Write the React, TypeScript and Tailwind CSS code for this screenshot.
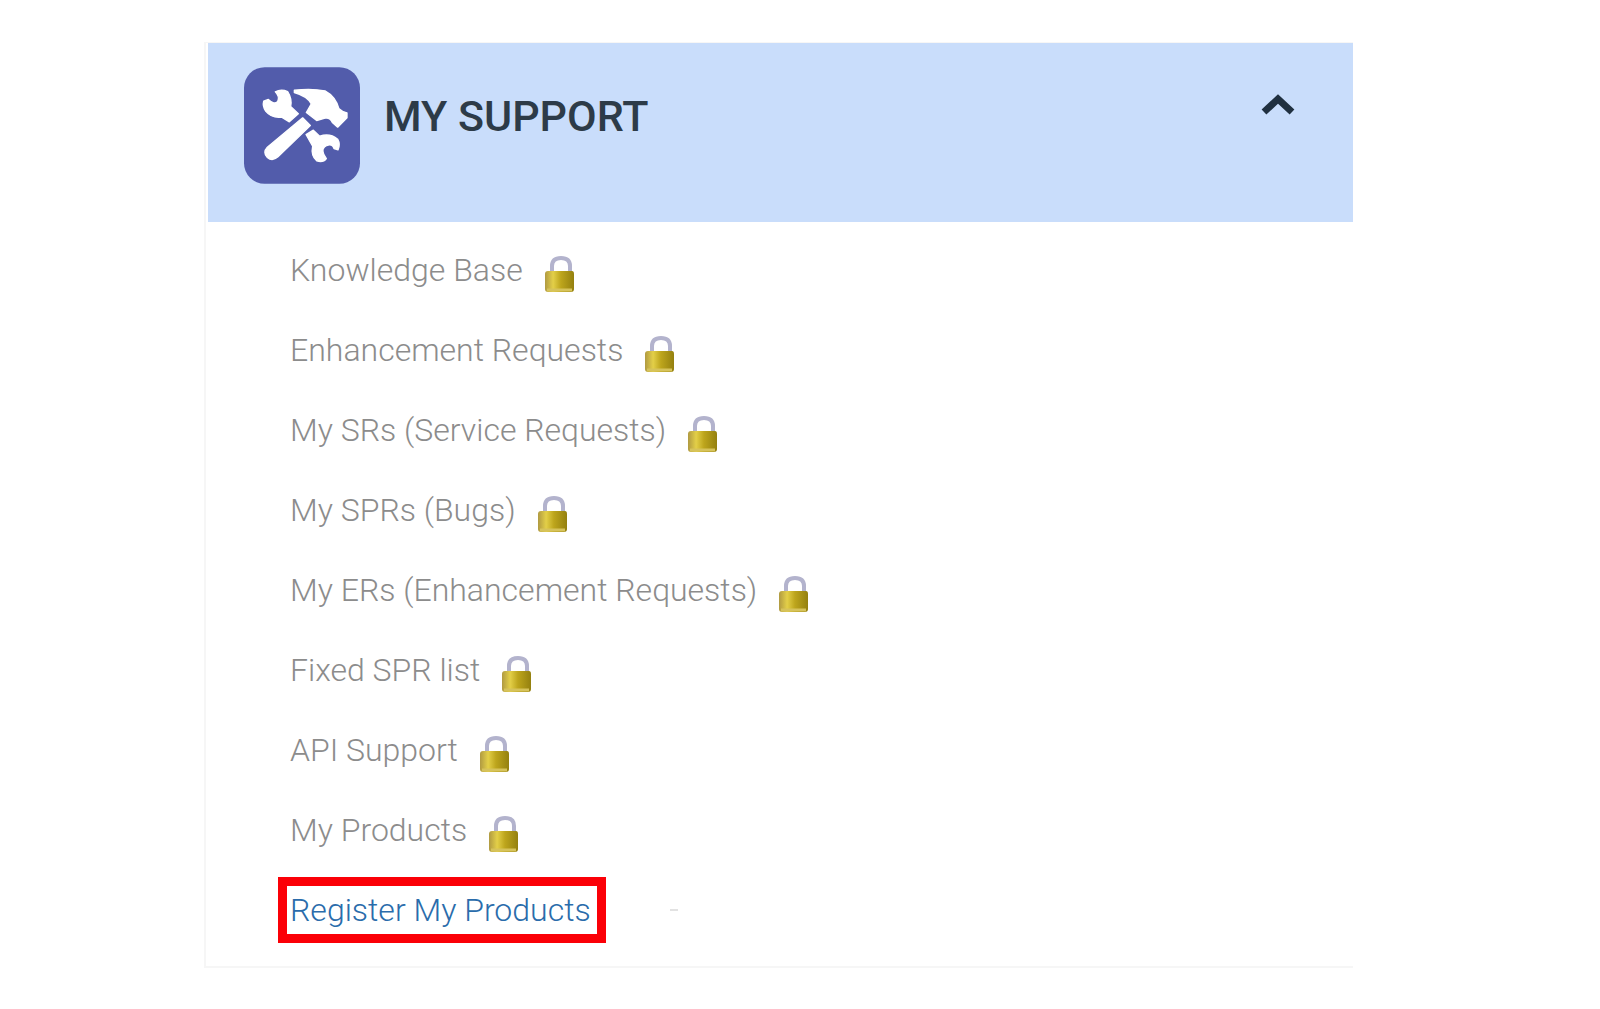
import React, { useState } from "react";

interface SupportLink {
  label: string;
  locked: boolean;
}

const supportLinks: SupportLink[] = [
  { label: "Knowledge Base", locked: true },
  { label: "Enhancement Requests", locked: true },
  { label: "My SRs (Service Requests)", locked: true },
  { label: "My SPRs (Bugs)", locked: true },
  { label: "My ERs (Enhancement Requests)", locked: true },
  { label: "Fixed SPR list", locked: true },
  { label: "API Support", locked: true },
  { label: "My Products", locked: true },
  { label: "Register My Products", locked: false },
];

const ToolsIcon: React.FC = () => (
  <svg viewBox="27 20 348 350" className="w-[116px] h-[117px] shrink-0" aria-hidden="true">
    <rect x="27" y="20" width="348" height="350" rx="62" fill="#525cab" />
    <g fill="#ffffff" stroke="#ffffff" strokeWidth="4" strokeLinejoin="round">
      {/* wrench, upper jaw */}
      <path d="M86 122L100 117Q118 134 128 123Q135 108 121 94Q138 84 158 93Q172 115 167 138L190 160L163 184L140 170Q110 174 92 152Q82 137 86 122Z" />
      {/* hammer head */}
      <path d="M178 89Q230 83 270 91Q302 108 312 145Q322 155 336 157L336 172L308 200L292 186Q285 170 270 173L245 180L214 156L229 130Q217 107 178 96Z" />
      {/* hammer handle */}
      <path d="M203 172L226 195L129 289Q112 304 97 291Q82 276 97 260Z" />
      {/* wrench, lower jaw */}
      <path d="M213 222L235 209L254 227Q285 217 308 236Q317 252 309 268L297 264Q292 249 275 255Q258 264 266 281L274 294Q265 307 245 301Q227 285 233 257Z" />
    </g>
  </svg>
);

const LockIcon: React.FC = () => (
  <svg viewBox="0 0 32 38" className="w-8 h-[38px] mt-2 shrink-0" aria-hidden="true">
    <defs>
      <linearGradient id="lock-body" x1="0" x2="1" y1="0" y2="0">
        <stop offset="0" stopColor="#b09a42" />
        <stop offset="0.28" stopColor="#e3cf48" />
        <stop offset="0.55" stopColor="#bda51c" />
        <stop offset="1" stopColor="#94800f" />
      </linearGradient>
    </defs>
    <path d="M9 19V11Q9 3 18 3Q27 3 27 11V19" fill="none" stroke="#b3b3cd" strokeWidth="4" />
    <path d="M2 19Q2 16 5 16H29Q31 16 31 19V34Q31 37 28 37H5Q2 37 2 34Z" fill="url(#lock-body)" />
    <path d="M4 35H29" stroke="#d6c35c" strokeWidth="3" />
  </svg>
);

const App: React.FC = () => {
  const [open, setOpen] = useState(true);

  return (
    <main className="min-h-screen bg-white pt-[42px] pl-[204px] pr-[247px] font-['Roboto',sans-serif]">
      <section className="border-l-2 border-t border-b-2 border-[#f6f6f6] pl-0.5">
        <button
          type="button"
          aria-expanded={open}
          onClick={() => setOpen(!open)}
          className="w-full flex items-start bg-[#c9ddfb] pt-6 pb-[38px] pl-9 pr-[58px] text-left"
        >
          <ToolsIcon />
          <span className="flex-1 pl-6 pt-6 text-[43px] leading-[50px] font-medium text-[#2d3b48]">
            MY SUPPORT
          </span>
          <svg
            viewBox="0 0 34 22"
            className={`w-[34px] h-[22px] mt-[26px] ${open ? "" : "rotate-180"}`}
            fill="none"
            stroke="#203040"
            strokeWidth="7"
            aria-hidden="true"
          >
            <path d="M3 19L17 6L31 19" />
          </svg>
        </button>

        {open && (
          <ul className="pl-[70px] pt-2 pb-4">
            {supportLinks.map((link) => (
              <li key={link.label} className="h-20 flex items-center">
                {link.locked ? (
                  <a href="#" className="flex items-center gap-5 pl-3 text-[32px] leading-10 font-light text-[#8c8c8c]">
                    {link.label}
                    <LockIcon />
                  </a>
                ) : (
                  <>
                    <a
                      href="#"
                      className="border-9 border-[#fb0007] pl-[3px] pr-1.5 py-1 text-[32px] leading-10 font-light text-[#2a6cab]"
                    >
                      {link.label}
                    </a>
                    <span className="ml-16 w-2 h-0.5 bg-[#e2e2e2]" />
                  </>
                )}
              </li>
            ))}
          </ul>
        )}
      </section>
    </main>
  );
};

export default App;
